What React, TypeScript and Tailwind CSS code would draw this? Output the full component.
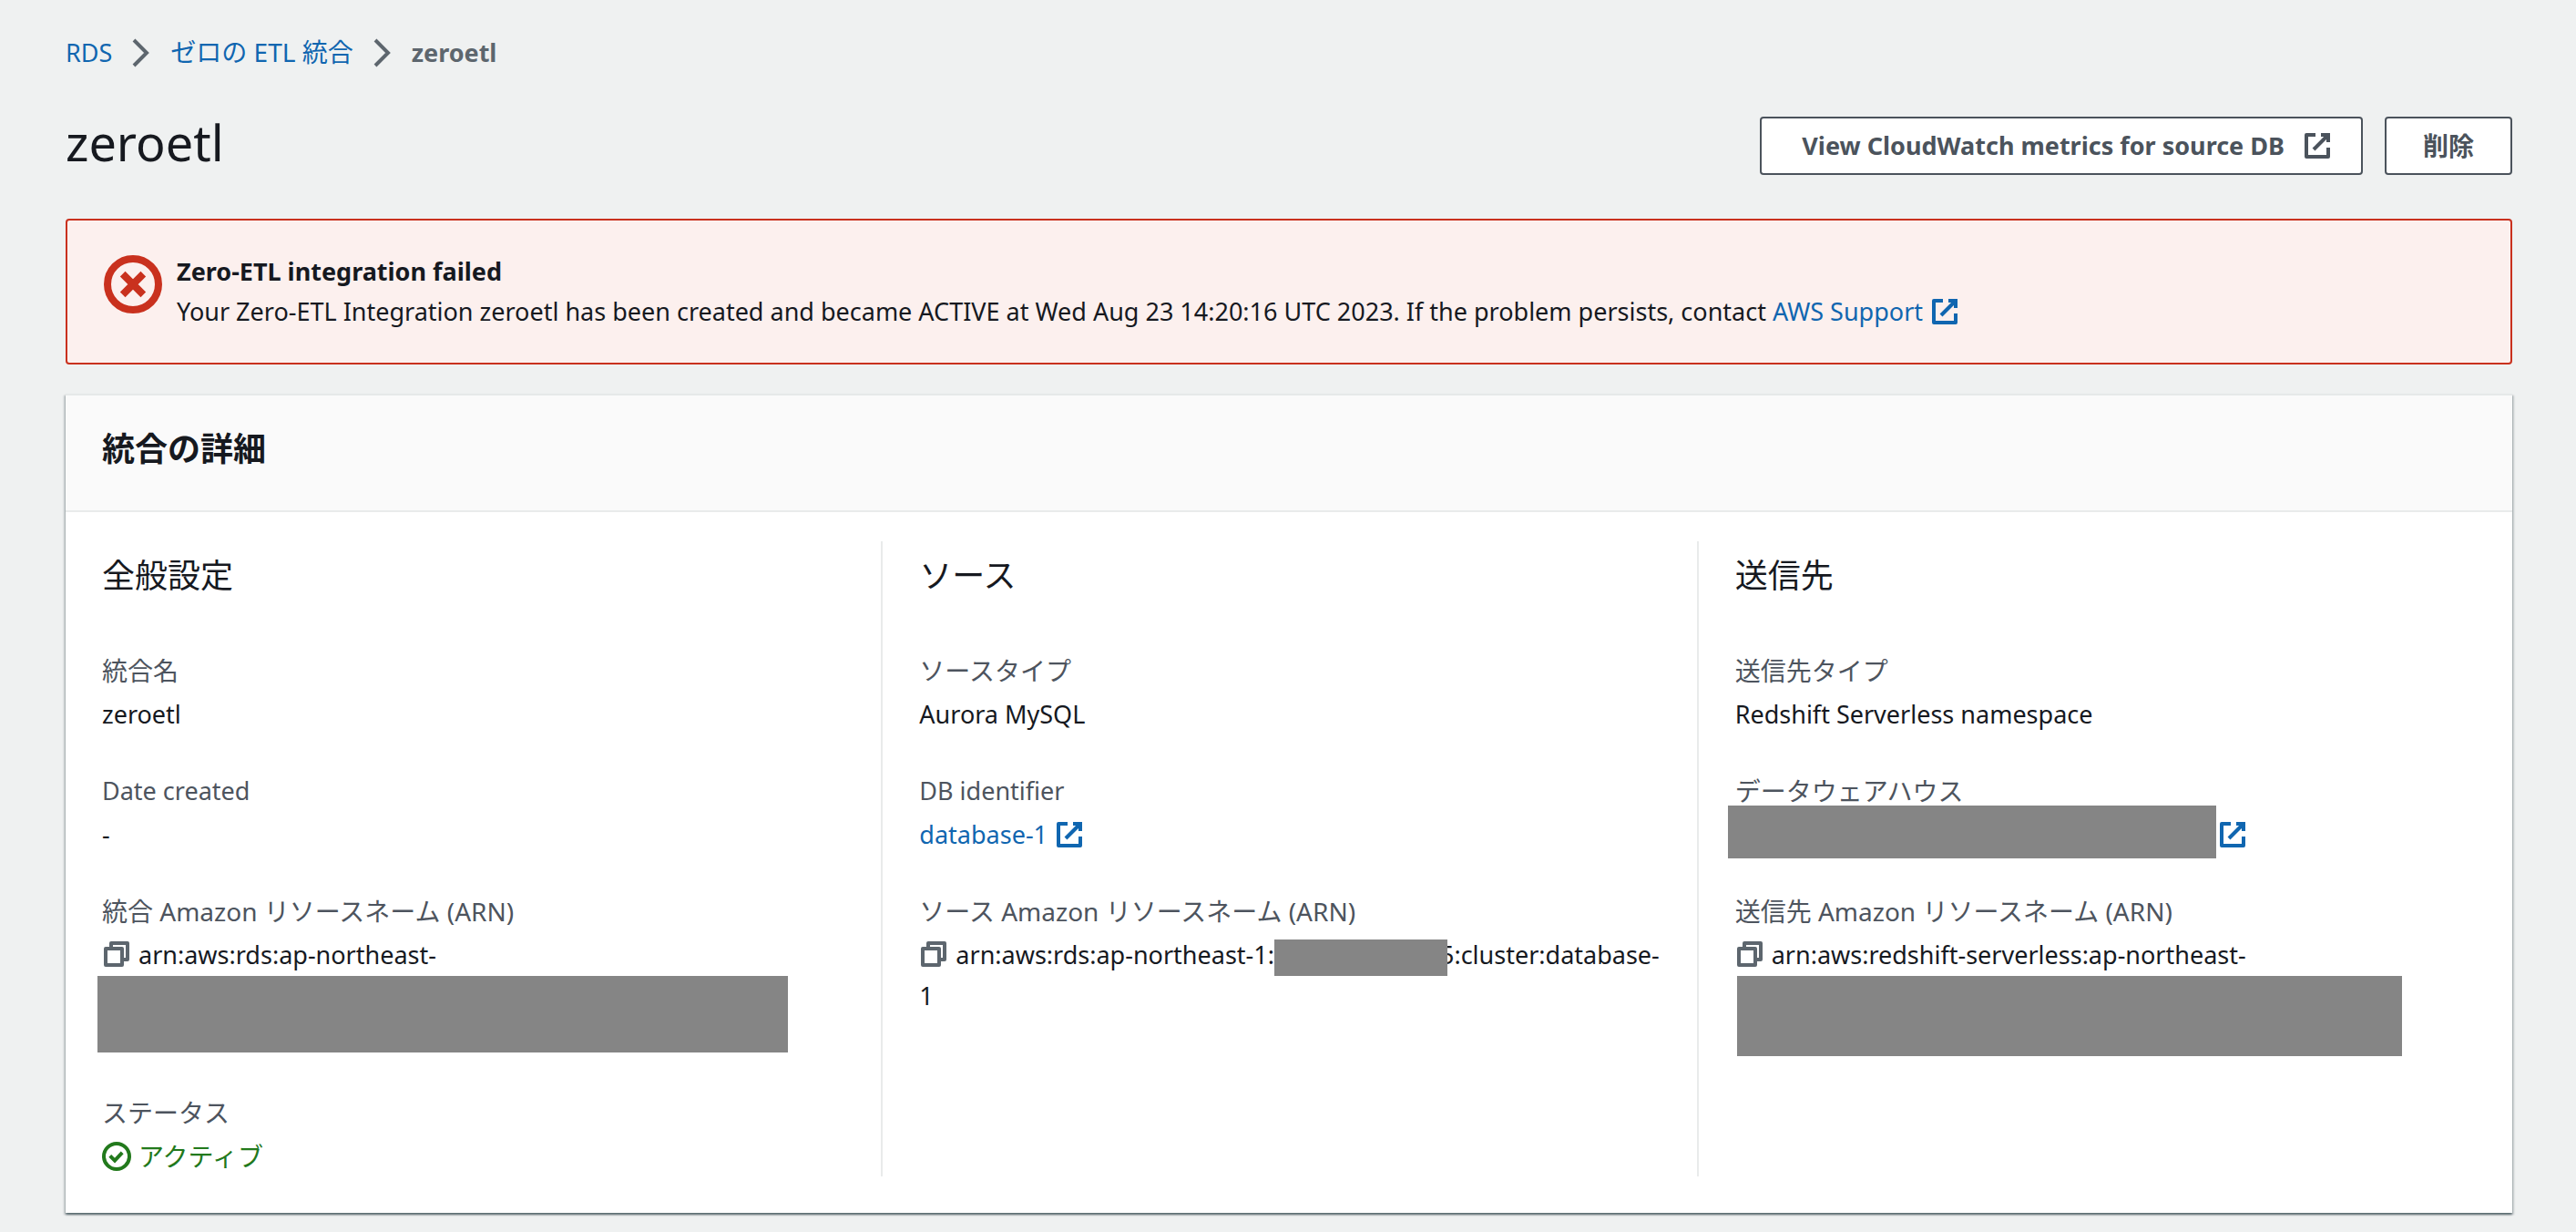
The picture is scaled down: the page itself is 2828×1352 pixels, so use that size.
import type { ReactNode } from "react";

function ExternalIcon({ className = "" }: { className?: string }) {
  return (
    <svg viewBox="0 0 16 16" aria-hidden="true" className={`size-8 shrink-0 fill-none stroke-current stroke-2 ${className}`}>
      <path d="M10 2h4v4" />
      <path d="M6 10l8-8" />
      <path strokeLinejoin="round" d="M14 9.05V14H2V2h5" />
    </svg>
  );
}

function ChevronIcon() {
  return (
    <svg viewBox="0 0 16 16" aria-hidden="true" className="size-8 shrink-0 fill-none stroke-[#5d666e] stroke-2">
      <path d="M4 1l7 7-7 7" />
    </svg>
  );
}

function ErrorIcon() {
  return (
    <svg viewBox="0 0 16 16" aria-hidden="true" className="mt-1 size-16 shrink-0 fill-none stroke-[#c9311e] stroke-2">
      <circle cx="8" cy="8" r="7" />
      <path d="M10.83 5.17l-5.66 5.66M10.83 10.83L5.17 5.17" />
    </svg>
  );
}

function CheckIcon() {
  return (
    <svg viewBox="0 0 16 16" aria-hidden="true" className="size-8 shrink-0 fill-none stroke-current stroke-2">
      <circle cx="8" cy="8" r="7" />
      <path d="M4.4 7.7l2.6 2.6 4.1-4.4" />
    </svg>
  );
}

function CopyButton({ label }: { label: string }) {
  return (
    <button type="button" aria-label={label} className="mr-2 mb-2 inline-block align-middle text-[#5d666e]">
      <svg viewBox="0 0 16 16" aria-hidden="true" className="size-8 fill-none stroke-current stroke-2">
        <path strokeLinejoin="round" d="M2 5h9v9H2z" />
        <path strokeLinejoin="round" d="M5 5V2h9v9h-3" />
      </svg>
    </button>
  );
}

function Column({ title, children, divided = true }: { title: string; children: ReactNode; divided?: boolean }) {
  return (
    <section className={`min-w-0 px-10 pt-4 ${divided ? "border-l-2 border-[#e9ebeb]" : ""}`}>
      <h3 className="mb-15 text-[36px] leading-[44px]">{title}</h3>
      <dl className="flex flex-col gap-10">{children}</dl>
    </section>
  );
}

function Field({ label, latin = false, children }: { label: string; latin?: boolean; children: ReactNode }) {
  return (
    <div className="flex flex-col gap-1">
      <dt className={`text-[#4d545e] ${latin ? "text-[27px] leading-[44px]" : "text-[28px] leading-[44px]"}`}>{label}</dt>
      <dd className="text-[27px] leading-[44px]">{children}</dd>
    </div>
  );
}

export default function App() {
  return (
    <main
      lang="ja"
      className="min-h-screen bg-[#eff1f1] pt-[35px] pr-[70px] pb-5 pl-[72px] font-['Noto_Sans','Noto_Sans_CJK_JP',sans-serif] text-[27px] leading-[44px] text-[#16191f]"
    >
      <nav aria-label="breadcrumb">
        <ol className="flex items-center gap-4">
          <li><a href="#rds" className="text-[#1066b0]">RDS</a></li>
          <li className="flex"><ChevronIcon /></li>
          <li><a href="#integrations" className="text-[28px] text-[#1066b0]">ゼロの ETL 統合</a></li>
          <li className="flex"><ChevronIcon /></li>
          <li aria-current="page" className="font-bold text-[#5d666e]">zeroetl</li>
        </ol>
      </nav>

      <header className="mt-10 flex items-start justify-between">
        <h1 className="text-[54px] leading-[72px]">zeroetl</h1>
        <div className="mt-2 flex gap-6 font-bold text-[#4b535c]">
          <button type="button" className="flex h-16 items-center gap-5 rounded-[4px] border-2 border-[#4b535c] bg-white pr-10 pl-11">
            View CloudWatch metrics for source DB
            <ExternalIcon className="-mr-2" />
          </button>
          <button type="button" className="h-16 rounded-[4px] border-2 border-[#4b535c] bg-white px-10 text-[28px]">
            削除
          </button>
        </div>
      </header>

      <div role="alert" className="mt-12 flex gap-4 rounded-[4px] border-2 border-[#c9311e] bg-[#fcf0ee] px-10 py-[34px]">
        <ErrorIcon />
        <div>
          <h2 className="font-bold">Zero-ETL integration failed</h2>
          <p className="flex items-center">
            <span>
              Your Zero-ETL Integration zeroetl has been created and became ACTIVE at Wed Aug 23 14:20:16 UTC 2023. If the
              problem persists, contact&nbsp;
            </span>
            <a href="#support" className="flex items-center gap-2 text-[#1066b0]">
              AWS Support
              <ExternalIcon />
            </a>
          </p>
        </div>
      </div>

      <section className="mt-8 border-t-2 border-[#e6e9e9] bg-white shadow-[0_2px_2px_0_rgba(0,28,36,0.5),2px_2px_2px_0_rgba(0,28,36,0.15),-2px_2px_2px_0_rgba(0,28,36,0.15)]">
        <div className="border-b-2 border-[#e9ebeb] bg-[#fafafa] px-10 pt-9 pb-11">
          <h2 className="text-[36px] leading-[46px] font-bold">統合の詳細</h2>
        </div>
        <div className="grid grid-cols-3 pt-8 pb-10">
          <Column title="全般設定" divided={false}>
            <Field label="統合名">zeroetl</Field>
            <Field label="Date created" latin>-</Field>
            <Field label="統合 Amazon リソースネーム (ARN)">
              <CopyButton label="ARN をコピー" />
              arn:aws:rds:ap-northeast-
              <div className="mb-1 -ml-[5px] h-21 w-[758px] max-w-full bg-[#858585]" />
            </Field>
            <Field label="ステータス">
              <span className="flex items-center gap-2 text-[28px] text-[#22791c]">
                <CheckIcon />
                アクティブ
              </span>
            </Field>
          </Column>

          <Column title="ソース">
            <Field label="ソースタイプ">Aurora MySQL</Field>
            <Field label="DB identifier" latin>
              <a href="#database-1" className="inline-flex items-center gap-2 align-top text-[#1066b0]">
                database-1
                <ExternalIcon />
              </a>
            </Field>
            <Field label="ソース Amazon リソースネーム (ARN)">
              <CopyButton label="ソース ARN をコピー" />
              arn:aws:rds:ap-northeast-1:
              <span className="relative -mr-2 inline-block h-10 w-[190px] bg-[#858585] align-middle" />
              5:cluster:database-
              <br />1
            </Field>
          </Column>

          <Column title="送信先">
            <Field label="送信先タイプ">Redshift Serverless namespace</Field>
            <Field label="データウェアハウス">
              <a href="#warehouse" aria-label="データウェアハウス" className="flex h-11 items-center gap-[2px] text-[#1066b0]">
                <span className="-mt-[6px] -ml-2 h-[58px] w-[536px] shrink-0 bg-[#858585]" />
                <ExternalIcon />
              </a>
            </Field>
            <Field label="送信先 Amazon リソースネーム (ARN)">
              <CopyButton label="送信先 ARN をコピー" />
              arn:aws:redshift-serverless:ap-northeast-
              <div className="ml-[2px] h-[88px] w-[730px] max-w-full bg-[#858585]" />
            </Field>
          </Column>
        </div>
      </section>
    </main>
  );
}
